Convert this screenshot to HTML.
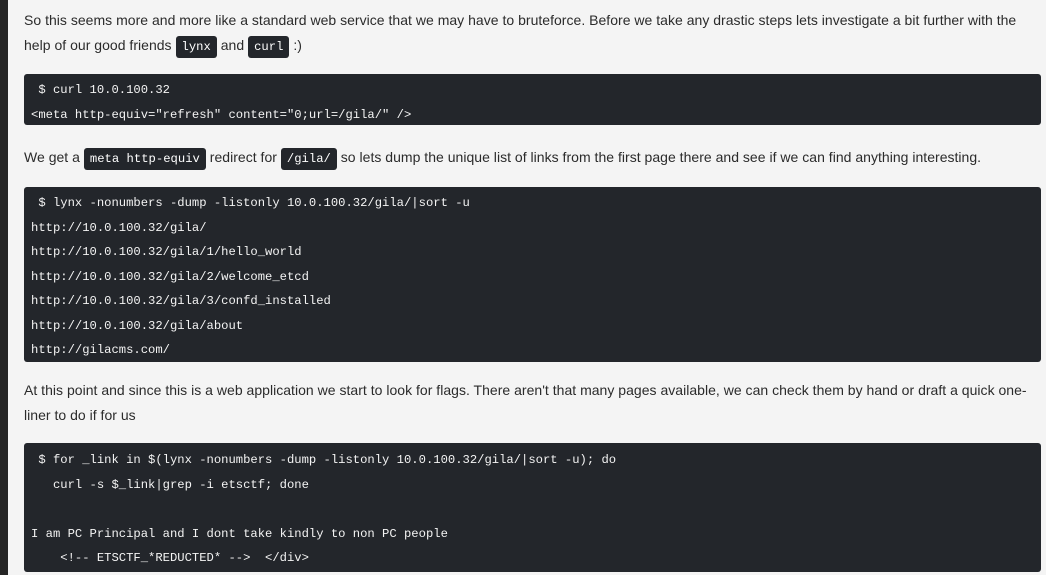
<!DOCTYPE html>
<html><head><meta charset="utf-8"><style>
html,body{margin:0;padding:0;}
body{width:1046px;height:575px;background:#f4f4f4;position:relative;overflow:hidden;font-family:"Liberation Sans",Arial,sans-serif;color:#2b2b2b;}
.strip{position:absolute;left:0;top:0;width:8px;height:575px;background:#252525;}
p{position:absolute;left:24px;margin:0;font-size:14px;line-height:25px;width:1000px;letter-spacing:0.02px;}
code{font-family:"Liberation Mono",monospace;font-size:12.2px;background:#23262b;color:#fff;border-radius:3px;padding:4px 6px;}
pre{position:absolute;left:24px;width:1017px;margin:0;background:#23262b;color:#f4f4f4;border-radius:3px;font-family:"Liberation Mono",monospace;font-size:12.2px;line-height:24.5px;padding:4px 0 0 7px;box-sizing:border-box;}
</style></head><body>
<div class="strip"></div>
<p style="top:8px">So this seems more and more like a standard web service that we may have to bruteforce. Before we take any drastic steps lets investigate a bit further with the help of our good friends <code>lynx</code> and <code>curl</code> :)</p>
<pre style="top:74px;height:51px"> $ curl 10.0.100.32
&lt;meta http-equiv="refresh" content="0;url=/gila/" /&gt;</pre>
<p style="top:145px">We get a <code>meta http-equiv</code> redirect for <code>/gila/</code> so lets dump the unique list of links from the first page there and see if we can find anything interesting.</p>
<pre style="top:187px;height:175px"> $ lynx -nonumbers -dump -listonly 10.0.100.32/gila/|sort -u
http://10.0.100.32/gila/
http://10.0.100.32/gila/1/hello_world
http://10.0.100.32/gila/2/welcome_etcd
http://10.0.100.32/gila/3/confd_installed
http://10.0.100.32/gila/about
http://gilacms.com/</pre>
<p style="top:378px;width:1020px">At this point and since this is a web application we start to look for flags. There aren't that many pages available, we can check them by hand or draft a quick one-<br>liner to do if for us</p>
<pre style="top:443px;height:129px;padding-top:5px"> $ for _link in $(lynx -nonumbers -dump -listonly 10.0.100.32/gila/|sort -u); do
   curl -s $_link|grep -i etsctf; done

I am PC Principal and I dont take kindly to non PC people
    &lt;!-- ETSCTF_*REDUCTED* --&gt;  &lt;/div&gt;</pre>
</body></html>
